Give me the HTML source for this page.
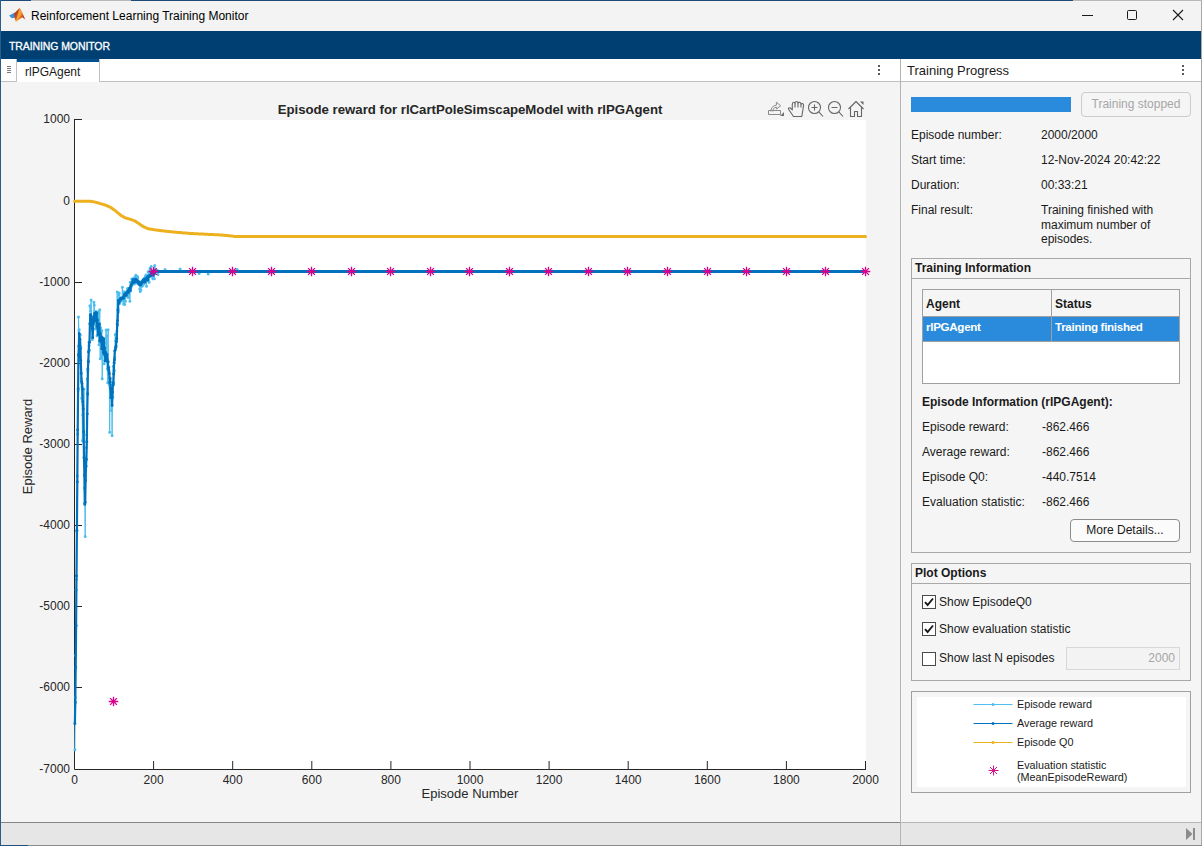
<!DOCTYPE html>
<html><head><meta charset="utf-8">
<style>
*{margin:0;padding:0;box-sizing:border-box}
html,body{width:1202px;height:846px;overflow:hidden;background:#f5f5f5}
body{position:relative;font-family:"Liberation Sans",sans-serif;font-size:12px;color:#1a1a1a}
.a{position:absolute}
.t{position:absolute;white-space:nowrap;line-height:1}
</style></head><body>
<!-- window edges -->
<div class="a" style="left:0;top:0;width:1202px;height:1px;background:#1e4a78"></div>
<div class="a" style="left:31px;top:0;width:100px;height:1px;background:#b8b8b8"></div>
<div class="a" style="left:1073px;top:0;width:129px;height:1px;background:#b8b8b8"></div>
<div class="a" style="left:0;top:0;width:1px;height:846px;background:#2a5d8c"></div>
<div class="a" style="left:1201px;top:1px;width:1px;height:845px;background:#a8a8a8"></div>
<!-- title bar -->
<div class="a" style="left:1px;top:1px;width:1200px;height:30px;background:#f3f3f3"></div>
<svg class="a" style="left:0;top:0" width="30" height="30" viewBox="0 0 30 30">
<defs><linearGradient id="mg" x1="14" y1="12" x2="25" y2="18" gradientUnits="userSpaceOnUse"><stop offset="0" stop-color="#9c2416"/><stop offset="0.35" stop-color="#d5541e"/><stop offset="0.55" stop-color="#f0a030"/><stop offset="0.8" stop-color="#c9361c"/><stop offset="1" stop-color="#b82c1a"/></linearGradient></defs>
<path d="M9,15.6L12.2,13.9L14.6,12.6L15.3,17.6L11.8,18.2Z" fill="#3d8fd6"/>
<path d="M14.2,13.6L19.5,8L21.8,11.5L25.2,19.6L22.3,17.2L15.9,21.8L14.6,17.8Z" fill="url(#mg)"/>
<path d="M19.5,8L21.3,11.5L19,17L15.9,21.8L17.2,16.5Z" fill="#f0a535"/>
</svg>
<div class="t" style="left:31px;top:10px;font-size:12px;color:#000">Reinforcement Learning Training Monitor</div>
<!-- window controls -->
<div class="a" style="left:1082px;top:15px;width:11px;height:1px;background:#1a1a1a"></div>
<div class="a" style="left:1127px;top:10px;width:10px;height:10px;border:1px solid #1a1a1a;border-radius:1.5px"></div>
<svg class="a" style="left:1172px;top:9px" width="12" height="12" viewBox="0 0 12 12"><path d="M1,1L11,11M11,1L1,11" stroke="#1a1a1a" stroke-width="1.1"/></svg>
<!-- toolstrip -->
<div class="a" style="left:1px;top:31px;width:1200px;height:28px;background:#003f72"></div>
<div class="t" style="left:9px;top:41px;font-size:10.5px;color:#fff;-webkit-text-stroke:0.3px #fff;letter-spacing:-0.1px">TRAINING MONITOR</div>
<!-- left document header row -->
<div class="a" style="left:1px;top:59px;width:899px;height:23px;background:#fff;border-bottom:1px solid #c0c0c0"></div>
<div class="a" style="left:1px;top:59px;width:16px;height:23px;background:#fff;border-right:1px solid #c0c0c0;border-bottom:1px solid #c0c0c0;border-bottom-right-radius:2px"></div>
<div class="a" style="left:7px;top:66px;width:4px;height:1px;background:#777"></div>
<div class="a" style="left:7px;top:68px;width:4px;height:1px;background:#777"></div>
<div class="a" style="left:7px;top:70px;width:4px;height:1px;background:#777"></div>
<div class="a" style="left:7px;top:72px;width:4px;height:1px;background:#777"></div>
<div class="a" style="left:17px;top:59px;width:83px;height:23px;background:#fff;border-right:1px solid #c0c0c0"></div><div class="a" style="left:17px;top:59px;width:82px;height:3px;background:#00508f"></div>
<div class="t" style="left:25px;top:66px;font-size:12px;color:#1a1a1a">rlPGAgent</div>
<div class="a" style="left:878px;top:65px;width:2px;height:2px;background:#5a5a5a"></div>
<div class="a" style="left:878px;top:69px;width:2px;height:2px;background:#5a5a5a"></div>
<div class="a" style="left:878px;top:73px;width:2px;height:2px;background:#5a5a5a"></div>
<!-- plot panel bg -->
<div class="a" style="left:1px;top:82px;width:899px;height:740px;background:#f4f4f4"></div>
<div class="a" style="left:75px;top:120px;width:791px;height:649px;background:#fff"></div>
<!-- separator -->
<div class="a" style="left:900px;top:59px;width:1px;height:787px;background:#b4b4b4"></div>
<!-- right header -->
<div class="a" style="left:901px;top:59px;width:300px;height:23px;background:#fff;border-bottom:1px solid #c0c0c0"></div>
<div class="t" style="left:907px;top:63.5px;font-size:13px;color:#1a1a1a">Training Progress</div>
<div class="a" style="left:1182px;top:65px;width:2px;height:2px;background:#5a5a5a"></div>
<div class="a" style="left:1182px;top:69px;width:2px;height:2px;background:#5a5a5a"></div>
<div class="a" style="left:1182px;top:73px;width:2px;height:2px;background:#5a5a5a"></div>
<!-- status bar -->
<div class="a" style="left:1px;top:822px;width:899px;height:1px;background:#858585"></div><div class="a" style="left:901px;top:822px;width:300px;height:1px;background:#b8b8b8"></div>
<div class="a" style="left:1px;top:823px;width:1200px;height:22px;background:#e6e6e6"></div>
<div class="a" style="left:900px;top:823px;width:1px;height:22px;background:#b4b4b4"></div>
<div class="a" style="left:0;top:845px;width:1202px;height:1px;background:#8c8c8c"></div><div class="a" style="left:0;top:845px;width:28px;height:1px;background:#1f5080"></div>
<svg class="a" style="left:1185px;top:827px" width="12" height="14" viewBox="0 0 12 14"><path d="M1,1L7.5,7L1,13Z" fill="#8c8c8c"/><rect x="8" y="1" width="2" height="12" fill="#8c8c8c"/></svg>
<svg class="a" style="left:0;top:0" width="1202" height="846"><path d="M74.5,119V769.5H866M75,119.5H82M75,201.5H82M75,282.5H82M75,363.5H82M75,444.5H82M75,525.5H82M75,606.5H82M75,687.5H82M153.6,769V761M232.7,769V761M311.8,769V761M390.9,769V761M470.0,769V761M549.1,769V761M628.2,769V761M707.3,769V761M786.4,769V761M865.5,769V761" fill="none" stroke="#262626" stroke-width="1"/></svg>
<div class="t" style="right:1132px;top:113.3px;font-size:12px;color:#262626;text-align:right">1000</div>
<div class="t" style="right:1132px;top:195.3px;font-size:12px;color:#262626;text-align:right">0</div>
<div class="t" style="right:1132px;top:276.3px;font-size:12px;color:#262626;text-align:right">-1000</div>
<div class="t" style="right:1132px;top:357.3px;font-size:12px;color:#262626;text-align:right">-2000</div>
<div class="t" style="right:1132px;top:438.3px;font-size:12px;color:#262626;text-align:right">-3000</div>
<div class="t" style="right:1132px;top:519.3px;font-size:12px;color:#262626;text-align:right">-4000</div>
<div class="t" style="right:1132px;top:600.3px;font-size:12px;color:#262626;text-align:right">-5000</div>
<div class="t" style="right:1132px;top:681.3px;font-size:12px;color:#262626;text-align:right">-6000</div>
<div class="t" style="right:1132px;top:763.3px;font-size:12px;color:#262626;text-align:right">-7000</div>
<div class="t" style="left:14.5px;width:120px;text-align:center;top:774px;font-size:12px;color:#262626">0</div>
<div class="t" style="left:93.6px;width:120px;text-align:center;top:774px;font-size:12px;color:#262626">200</div>
<div class="t" style="left:172.7px;width:120px;text-align:center;top:774px;font-size:12px;color:#262626">400</div>
<div class="t" style="left:251.8px;width:120px;text-align:center;top:774px;font-size:12px;color:#262626">600</div>
<div class="t" style="left:330.9px;width:120px;text-align:center;top:774px;font-size:12px;color:#262626">800</div>
<div class="t" style="left:410.0px;width:120px;text-align:center;top:774px;font-size:12px;color:#262626">1000</div>
<div class="t" style="left:489.1px;width:120px;text-align:center;top:774px;font-size:12px;color:#262626">1200</div>
<div class="t" style="left:568.2px;width:120px;text-align:center;top:774px;font-size:12px;color:#262626">1400</div>
<div class="t" style="left:647.3px;width:120px;text-align:center;top:774px;font-size:12px;color:#262626">1600</div>
<div class="t" style="left:726.4px;width:120px;text-align:center;top:774px;font-size:12px;color:#262626">1800</div>
<div class="t" style="left:805.5px;width:120px;text-align:center;top:774px;font-size:12px;color:#262626">2000</div>
<div class="t" style="left:270px;width:400px;text-align:center;top:103px;font-size:13.2px;font-weight:bold;color:#262626">Episode reward for rlCartPoleSimscapeModel with rlPGAgent</div>
<div class="t" style="left:370px;width:200px;text-align:center;top:787px;font-size:13px;color:#262626">Episode Number</div>
<div class="t" style="left:-73px;width:200px;text-align:center;top:439.5px;font-size:13px;color:#262626;transform:rotate(-90deg)">Episode Reward</div><svg width="1202" height="846" viewBox="0 0 1202 846" style="position:absolute;left:0;top:0">
<defs><clipPath id="ax"><rect x="72" y="117" width="800" height="655"/></clipPath></defs>
<g clip-path="url(#ax)">
<path d="M74.5,201.2L75.5,201.2L76.5,201.2L77.5,201.2L78.5,201.2L79.5,201.2L80.5,201.2L81.5,201.2L82.5,201.2L83.5,201.2L84.5,201.2L85.5,201.2L86.5,201.2L87.5,201.2L88.5,201.2L89.5,201.2L90.5,201.3L91.5,201.5L92.5,201.6L93.5,201.8L94.5,201.9L95.5,202.2L96.5,202.4L97.5,202.8L98.5,203.1L99.5,203.3L100.5,203.7L101.5,203.9L102.5,204.2L103.5,204.6L104.5,204.8L105.5,205.2L106.5,205.6L107.5,206L108.5,206.4L109.5,206.8L110.5,207.3L111.5,208L112.5,208.7L113.5,209.4L114.5,210.1L115.5,210.9L116.5,211.7L117.5,212.6L118.5,213.4L119.5,214.2L120.5,215.1L121.5,215.8L122.5,216.3L123.5,216.9L124.5,217.5L125.5,217.9L126.5,218.2L127.5,218.5L128.5,218.8L129.5,219.1L130.5,219.4L131.5,219.7L132.5,220.1L133.5,220.4L134.5,220.8L135.5,221.4L136.5,222L137.5,222.7L138.5,223.3L139.5,224L140.5,224.7L141.5,225.4L142.5,226.1L143.5,226.7L144.5,227.2L145.5,227.6L146.5,228L147.5,228.5L148.5,228.8L149.5,229L150.5,229.1L151.5,229.3L152.5,229.5L153.5,229.6L154.5,229.8L155.5,229.9L156.5,230L157.5,230.2L158.5,230.3L159.5,230.4L160.5,230.5L161.5,230.7L162.5,230.8L163.5,230.9L164.5,231L165.5,231.2L166.5,231.3L167.5,231.4L168.5,231.5L169.5,231.6L170.5,231.7L171.5,231.8L172.5,231.9L173.5,232L174.5,232.1L175.5,232.2L176.5,232.3L177.5,232.4L178.5,232.5L179.5,232.5L180.5,232.6L181.5,232.7L182.5,232.8L183.5,232.9L184.5,233L185.5,233L186.5,233.1L187.5,233.2L188.5,233.3L189.5,233.4L190.5,233.4L191.5,233.5L192.5,233.5L193.5,233.6L194.5,233.7L195.5,233.7L196.5,233.8L197.5,233.8L198.5,233.9L199.5,233.9L200.5,234L201.5,234L202.5,234.1L203.5,234.1L204.5,234.2L205.5,234.2L206.5,234.3L207.5,234.3L208.5,234.4L209.5,234.4L210.5,234.5L211.5,234.5L212.5,234.6L213.5,234.6L214.5,234.7L215.5,234.7L216.5,234.8L217.5,234.8L218.5,234.8L219.5,234.9L220.5,235L221.5,235.1L222.5,235.1L223.5,235.2L224.5,235.3L225.5,235.4L226.5,235.5L227.5,235.6L228.5,235.7L229.5,235.8L230.5,235.9L231.5,236L232.5,236.1L233.5,236.3L234.5,236.4L235.5,236.5L236.5,236.6L237.5,236.6L238.5,236.6L239.5,236.6L865.5,236.6" fill="none" stroke="#EDB120" stroke-width="3" stroke-linejoin="round" stroke-linecap="round"/>
<path d="M74.9,749.8L75.3,697.2L75.7,655.5L76.1,590L76.5,579.6L76.9,530.7L77.3,476L77.7,434.1L78.1,390.6L78.5,317L78.9,330.6L79.2,329.7L79.6,347.7L80,351.7L80.4,335.1L80.8,346.9L81.2,378.7L81.6,398.3L82,386.4L82.4,440.6L82.8,414.8L83.2,405.3L83.6,441.9L84,389L84.4,487.9L84.8,502.9L85.2,536.6L85.6,475.9L86,466.8L86.4,447.4L86.8,434.8L87.2,379L87.6,394.1L87.9,371.3L88.3,360.7L88.7,351.6L89.1,345.5L89.5,350L89.9,305.8L90.3,306.5L90.7,310.9L91.1,300L91.5,318.8L91.9,325.3L92.3,339.6L92.7,316.8L93.1,328.3L93.5,324.6L93.9,302.2L94.3,305.2L94.7,322.2L95.1,323.4L95.5,329L95.9,311.5L96.3,324.1L96.6,322.5L97,335.8L97.4,314.7L97.8,324L98.2,331.4L98.6,311.4L99,344.8L99.4,323.2L99.8,309.8L100.2,358.8L100.6,327.7L101,332.8L101.4,357.6L101.8,330.4L102.2,378.7L102.6,351.6L103,352.8L103.4,354.8L103.8,352.7L104.2,363.8L104.6,360.6L105,356.3L105.3,342.7L105.7,342.7L106.1,330L106.5,359.9L106.9,335.7L107.3,368.8L107.7,382.8L108.1,329.7L108.5,361.7L108.9,367.3L109.3,385.1L109.7,432.3L110.1,382.1L110.5,382L110.9,389.3L111.3,410.5L111.7,389.9L112.1,435.6L112.5,398.1L112.9,397L113.3,366.2L113.7,384.8L114.1,370.2L114.4,370.7L114.8,357.5L115.2,334.4L115.6,340.9L116,347L116.4,339.3L116.8,331.4L117.2,292L117.6,325.2L118,308.6L118.4,312L118.8,294.7L119.2,293L119.6,303.4L120,298.5L120.4,301.6L120.8,301L121.2,298.2L121.6,301L122,298.5L122.4,287.3L122.8,298.1L123.1,297.6L123.5,303.9L123.9,291.7L124.3,296L124.7,304.6L125.1,294.6L125.5,301.3L125.9,295.7L126.3,291.9L126.7,293.9L127.1,295.9L127.5,288.4L127.9,290.9L128.3,297.6L128.7,294.4L129.1,290.4L129.5,288.2L129.9,301.3L130.3,282.2L130.7,291.1L131.1,287.6L131.5,285.7L131.8,278.9L132.2,280.1L132.6,283.9L133,281.8L133.4,278.5L133.8,282.4L134.2,284.1L134.6,277.5L135,278L135.4,276.6L135.8,275.3L136.2,283L136.6,282.1L137,282L137.4,276.6L137.8,277.7L138.2,282.2L138.6,281.4L139,284.2L139.4,281.5L139.8,288.9L140.2,291.5L140.5,290.1L140.9,290L141.3,283.4L141.7,286.5L142.1,280.9L142.5,285.7L142.9,280.1L143.3,279.5L143.7,278.7L144.1,284L144.5,282.2L144.9,281.7L145.3,276.3L145.7,281.3L146.1,274.9L146.5,286.2L146.9,276.5L147.3,279.9L147.7,278.2L148.1,271.7L148.5,271.9L148.9,276.7L149.2,282.2L149.6,271.2L150,268.5L150.4,274.3L150.8,267.1L151.2,266.5L151.6,271.4L152,272.7L152.4,271.2L152.8,278.8L153.2,271.8L153.6,273.7L154,278.5L154.4,278.8L154.8,265.5L155.2,270.2L155.6,271.5L156,271.4L156.4,271.3L156.8,271.3L157.2,271.3L157.6,271.3L158,274.4L158.3,271.3L158.7,271.4L159.1,271.4L159.5,271.4L159.9,271.4L160.3,271.4L160.7,271.4L161.1,271.4L161.5,271.4L161.9,271.4L162.3,271.4L162.7,271.4L163.1,271.4L163.5,271.4L163.9,271.4L164.3,271.4L164.7,271.4L165.1,269.4L165.5,271.4L165.9,271.4L166.3,271.4L166.7,271.4L167,271.4L167.4,271.4L167.8,271.4L168.2,271.4L168.6,271.4L169,271.4L169.4,271.4L169.8,271.4L170.2,271.4L170.6,271.4L171,271.4L171.4,271.4L171.8,271.4L172.2,271.4L172.6,271.4L173,271.4L173.4,271.4L173.8,271.4L174.2,271.4L174.6,271.4L175,271.4L175.4,271.4L175.7,271.4L176.1,271.4L176.5,271.4L176.9,271.4L177.3,271.4L177.7,271.4L178.1,271.4L178.5,271.4L178.9,271.4L179.3,271.4L179.7,271.4L180.1,268.9L180.5,271.4L180.9,271.4L181.3,271.4L181.7,271.4L182.1,271.4L182.5,271.4L182.9,271.4L183.3,271.4L183.7,271.4L184.1,271.4L184.4,271.4L184.8,271.4L185.2,271.4L185.6,271.4L186,271.4L186.4,271.4L186.8,271.4L187.2,271.4L187.6,271.4L188,271.4L188.4,271.4L188.8,271.4L189.2,271.4L189.6,271.4L190,271.4L190.4,271.4L190.8,271.4L191.2,271.4L191.6,271.4L192,271.4L192.4,271.4L192.8,271.4L193.2,271.4L193.5,271.4L193.9,271.4L194.3,271.4L194.7,271.4L195.1,271.4L195.5,271.4L195.9,271.4L196.3,271.4L196.7,271.4L197.1,271.4L197.5,271.4L197.9,271.4L198.3,271.4L198.7,271.4L199.1,273.4L199.5,271.4L199.9,271.4L200.3,271.4L200.7,271.4L201.1,271.4L201.5,271.4L201.9,271.4L202.2,271.4L202.6,271.4L203,271.4L203.4,271.4L203.8,271.4L204.2,271.4L204.6,271.4L205,271.4L205.4,271.4L205.8,271.4L206.2,271.4L206.6,271.4L207,271.4L207.4,271.4L207.8,271.4L208.2,273.9L208.6,271.4L209,271.4L209.4,271.4L209.8,271.4L210.2,271.4L210.6,271.4L210.9,271.4L211.3,271.4L211.7,271.4L212.1,271.4L212.5,271.4L212.9,271.4L213.3,271.4L213.7,271.4L214.1,271.4L214.5,271.4L214.9,271.4L215.3,271.4L215.7,271.4L216.1,271.4L216.5,271.4L216.9,271.4L217.3,271.4L217.7,271.4L218.1,271.4L218.5,271.4L218.9,271.4L219.3,271.4L219.6,271.4L220,271.4L220.4,271.4L220.8,271.4L221.2,271.4L221.6,271.4L222,271.4L222.4,271.4L222.8,271.4L223.2,271.4L223.6,271.4L224,271.4L224.4,271.4L224.8,271.4L225.2,271.4L225.6,271.4L226,271.4L226.4,271.4L226.8,271.4L227.2,271.4L227.6,271.4L228,271.4L228.3,271.4L228.7,271.4L229.1,271.4L229.5,271.4L229.9,271.4L230.3,271.4L230.7,271.4L231.1,271.4L231.5,271.4L231.9,271.4L232.3,271.4L232.7,271.4L233.1,271.4L233.5,271.4L233.9,271.4L234.3,271.4L234.7,271.4L235.1,271.4L235.5,271.4L235.9,271.4L236.3,271.4L236.7,271.4L237.1,269.4L237.4,271.4L237.8,271.4L238.2,271.4L238.6,271.4L239,271.4L239.4,271.4L239.8,271.4L865.5,271.4" fill="none" stroke="#4DBEEE" stroke-width="1" stroke-linejoin="round"/>
<path d="M74.9,749.8h0M75.3,697.2h0M75.7,655.5h0M76.1,590h0M76.5,579.6h0M76.9,530.7h0M77.3,476h0M77.7,434.1h0M78.1,390.6h0M78.5,317h0M78.9,330.6h0M79.2,329.7h0M79.6,347.7h0M80,351.7h0M80.4,335.1h0M80.8,346.9h0M81.2,378.7h0M81.6,398.3h0M82,386.4h0M82.4,440.6h0M82.8,414.8h0M83.2,405.3h0M83.6,441.9h0M84,389h0M84.4,487.9h0M84.8,502.9h0M85.2,536.6h0M85.6,475.9h0M86,466.8h0M86.4,447.4h0M86.8,434.8h0M87.2,379h0M87.6,394.1h0M87.9,371.3h0M88.3,360.7h0M88.7,351.6h0M89.1,345.5h0M89.5,350h0M89.9,305.8h0M90.3,306.5h0M90.7,310.9h0M91.1,300h0M91.5,318.8h0M91.9,325.3h0M92.3,339.6h0M92.7,316.8h0M93.1,328.3h0M93.5,324.6h0M93.9,302.2h0M94.3,305.2h0M94.7,322.2h0M95.1,323.4h0M95.5,329h0M95.9,311.5h0M96.3,324.1h0M96.6,322.5h0M97,335.8h0M97.4,314.7h0M97.8,324h0M98.2,331.4h0M98.6,311.4h0M99,344.8h0M99.4,323.2h0M99.8,309.8h0M100.2,358.8h0M100.6,327.7h0M101,332.8h0M101.4,357.6h0M101.8,330.4h0M102.2,378.7h0M102.6,351.6h0M103,352.8h0M103.4,354.8h0M103.8,352.7h0M104.2,363.8h0M104.6,360.6h0M105,356.3h0M105.3,342.7h0M105.7,342.7h0M106.1,330h0M106.5,359.9h0M106.9,335.7h0M107.3,368.8h0M107.7,382.8h0M108.1,329.7h0M108.5,361.7h0M108.9,367.3h0M109.3,385.1h0M109.7,432.3h0M110.1,382.1h0M110.5,382h0M110.9,389.3h0M111.3,410.5h0M111.7,389.9h0M112.1,435.6h0M112.5,398.1h0M112.9,397h0M113.3,366.2h0M113.7,384.8h0M114.1,370.2h0M114.4,370.7h0M114.8,357.5h0M115.2,334.4h0M115.6,340.9h0M116,347h0M116.4,339.3h0M116.8,331.4h0M117.2,292h0M117.6,325.2h0M118,308.6h0M118.4,312h0M118.8,294.7h0M119.2,293h0M119.6,303.4h0M120,298.5h0M120.4,301.6h0M120.8,301h0M121.2,298.2h0M121.6,301h0M122,298.5h0M122.4,287.3h0M122.8,298.1h0M123.1,297.6h0M123.5,303.9h0M123.9,291.7h0M124.3,296h0M124.7,304.6h0M125.1,294.6h0M125.5,301.3h0M125.9,295.7h0M126.3,291.9h0M126.7,293.9h0M127.1,295.9h0M127.5,288.4h0M127.9,290.9h0M128.3,297.6h0M128.7,294.4h0M129.1,290.4h0M129.5,288.2h0M129.9,301.3h0M130.3,282.2h0M130.7,291.1h0M131.1,287.6h0M131.5,285.7h0M131.8,278.9h0M132.2,280.1h0M132.6,283.9h0M133,281.8h0M133.4,278.5h0M133.8,282.4h0M134.2,284.1h0M134.6,277.5h0M135,278h0M135.4,276.6h0M135.8,275.3h0M136.2,283h0M136.6,282.1h0M137,282h0M137.4,276.6h0M137.8,277.7h0M138.2,282.2h0M138.6,281.4h0M139,284.2h0M139.4,281.5h0M139.8,288.9h0M140.2,291.5h0M140.5,290.1h0M140.9,290h0M141.3,283.4h0M141.7,286.5h0M142.1,280.9h0M142.5,285.7h0M142.9,280.1h0M143.3,279.5h0M143.7,278.7h0M144.1,284h0M144.5,282.2h0M144.9,281.7h0M145.3,276.3h0M145.7,281.3h0M146.1,274.9h0M146.5,286.2h0M146.9,276.5h0M147.3,279.9h0M147.7,278.2h0M148.1,271.7h0M148.5,271.9h0M148.9,276.7h0M149.2,282.2h0M149.6,271.2h0M150,268.5h0M150.4,274.3h0M150.8,267.1h0M151.2,266.5h0M151.6,271.4h0M152,272.7h0M152.4,271.2h0M152.8,278.8h0M153.2,271.8h0M153.6,273.7h0M154,278.5h0M154.4,278.8h0M154.8,265.5h0M155.2,270.2h0M155.6,271.5h0M156,271.4h0M156.4,271.3h0M156.8,271.3h0M157.2,271.3h0M157.6,271.3h0M158,274.4h0M158.3,271.3h0M158.7,271.4h0M159.1,271.4h0M159.5,271.4h0M159.9,271.4h0M160.3,271.4h0M160.7,271.4h0M161.1,271.4h0M161.5,271.4h0M161.9,271.4h0M162.3,271.4h0M162.7,271.4h0M163.1,271.4h0M163.5,271.4h0M163.9,271.4h0M164.3,271.4h0M164.7,271.4h0M165.1,269.4h0M165.5,271.4h0M165.9,271.4h0M166.3,271.4h0M166.7,271.4h0M167,271.4h0M167.4,271.4h0M167.8,271.4h0M168.2,271.4h0M168.6,271.4h0M169,271.4h0M169.4,271.4h0M169.8,271.4h0M170.2,271.4h0M170.6,271.4h0M171,271.4h0M171.4,271.4h0M171.8,271.4h0M172.2,271.4h0M172.6,271.4h0M173,271.4h0M173.4,271.4h0M173.8,271.4h0M174.2,271.4h0M174.6,271.4h0M175,271.4h0M175.4,271.4h0M175.7,271.4h0M176.1,271.4h0M176.5,271.4h0M176.9,271.4h0M177.3,271.4h0M177.7,271.4h0M178.1,271.4h0M178.5,271.4h0M178.9,271.4h0M179.3,271.4h0M179.7,271.4h0M180.1,268.9h0M180.5,271.4h0M180.9,271.4h0M181.3,271.4h0M181.7,271.4h0M182.1,271.4h0M182.5,271.4h0M182.9,271.4h0M183.3,271.4h0M183.7,271.4h0M184.1,271.4h0M184.4,271.4h0M184.8,271.4h0M185.2,271.4h0M185.6,271.4h0M186,271.4h0M186.4,271.4h0M186.8,271.4h0M187.2,271.4h0M187.6,271.4h0M188,271.4h0M188.4,271.4h0M188.8,271.4h0M189.2,271.4h0M189.6,271.4h0M190,271.4h0M190.4,271.4h0M190.8,271.4h0M191.2,271.4h0M191.6,271.4h0M192,271.4h0M192.4,271.4h0M192.8,271.4h0M193.2,271.4h0M193.5,271.4h0M193.9,271.4h0M194.3,271.4h0M194.7,271.4h0M195.1,271.4h0M195.5,271.4h0M195.9,271.4h0M196.3,271.4h0M196.7,271.4h0M197.1,271.4h0M197.5,271.4h0M197.9,271.4h0M198.3,271.4h0M198.7,271.4h0M199.1,273.4h0M199.5,271.4h0M199.9,271.4h0M200.3,271.4h0M200.7,271.4h0M201.1,271.4h0M201.5,271.4h0M201.9,271.4h0M202.2,271.4h0M202.6,271.4h0M203,271.4h0M203.4,271.4h0M203.8,271.4h0M204.2,271.4h0M204.6,271.4h0M205,271.4h0M205.4,271.4h0M205.8,271.4h0M206.2,271.4h0M206.6,271.4h0M207,271.4h0M207.4,271.4h0M207.8,271.4h0M208.2,273.9h0M208.6,271.4h0M209,271.4h0M209.4,271.4h0M209.8,271.4h0M210.2,271.4h0M210.6,271.4h0M210.9,271.4h0M211.3,271.4h0M211.7,271.4h0M212.1,271.4h0M212.5,271.4h0M212.9,271.4h0M213.3,271.4h0M213.7,271.4h0M214.1,271.4h0M214.5,271.4h0M214.9,271.4h0M215.3,271.4h0M215.7,271.4h0M216.1,271.4h0M216.5,271.4h0M216.9,271.4h0M217.3,271.4h0M217.7,271.4h0M218.1,271.4h0M218.5,271.4h0M218.9,271.4h0M219.3,271.4h0M219.6,271.4h0M220,271.4h0M220.4,271.4h0M220.8,271.4h0M221.2,271.4h0M221.6,271.4h0M222,271.4h0M222.4,271.4h0M222.8,271.4h0M223.2,271.4h0M223.6,271.4h0M224,271.4h0M224.4,271.4h0M224.8,271.4h0M225.2,271.4h0M225.6,271.4h0M226,271.4h0M226.4,271.4h0M226.8,271.4h0M227.2,271.4h0M227.6,271.4h0M228,271.4h0M228.3,271.4h0M228.7,271.4h0M229.1,271.4h0M229.5,271.4h0M229.9,271.4h0M230.3,271.4h0M230.7,271.4h0M231.1,271.4h0M231.5,271.4h0M231.9,271.4h0M232.3,271.4h0M232.7,271.4h0M233.1,271.4h0M233.5,271.4h0M233.9,271.4h0M234.3,271.4h0M234.7,271.4h0M235.1,271.4h0M235.5,271.4h0M235.9,271.4h0M236.3,271.4h0M236.7,271.4h0M237.1,269.4h0M237.4,271.4h0M237.8,271.4h0M238.2,271.4h0M238.6,271.4h0M239,271.4h0M239.4,271.4h0M239.8,271.4h0" fill="none" stroke="#4DBEEE" stroke-width="3" stroke-linecap="round"/>
<path d="M74.9,723.6L75.3,702.2L75.7,667L76.1,625.6L76.5,575.8L76.9,530.6L77.3,481.7L77.7,429.8L78.1,388.6L78.5,354.7L78.9,345.9L79.2,333.4L79.6,343.6L80,339.2L80.4,348.7L80.8,360.6L81.2,373.3L81.6,381.6L82,383.4L82.4,389.1L82.8,401.6L83.2,408.8L83.6,431.8L84,457.4L84.4,475.1L84.8,504.2L85.2,502.3L85.6,480.2L86,465.7L86.4,459.3L86.8,441.7L87.2,413.8L87.6,393.8L87.9,369L88.3,361.7L88.7,351.7L89.1,342.2L89.5,342.3L89.9,323.8L90.3,315.2L90.7,314.6L91.1,316.4L91.5,325.2L91.9,323.7L92.3,328.5L92.7,337.6L93.1,323.7L93.5,318.7L93.9,321.6L94.3,315.9L94.7,313.3L95.1,316.8L95.5,320.6L95.9,312.5L96.3,319.1L96.6,312.9L97,326.3L97.4,320L97.8,328.2L98.2,334.4L98.6,334.2L99,332.1L99.4,324.1L99.8,341.1L100.2,333.5L100.6,340L101,336.6L101.4,339.5L101.8,348.8L102.2,337.5L102.6,341L103,346.6L103.4,352.5L103.8,338.7L104.2,354.1L104.6,347.8L105,352.6L105.3,360.7L105.7,352.6L106.1,355.4L106.5,357.9L106.9,354.6L107.3,359.7L107.7,361.8L108.1,366.7L108.5,368L108.9,370.5L109.3,373.5L109.7,382.4L110.1,378.2L110.5,388.2L110.9,397.6L111.3,390.7L111.7,393.5L112.1,405.3L112.5,391.9L112.9,384.7L113.3,382.7L113.7,373.8L114.1,362.7L114.4,359.8L114.8,350.8L115.2,350.1L115.6,347.7L116,345.9L116.4,341.5L116.8,338.5L117.2,323.7L117.6,320.4L118,309.9L118.4,300.3L118.8,303L119.2,301.5L119.6,300.6L120,300.1L120.4,299.4L120.8,298L121.2,298.3L121.6,298.5L122,298.6L122.4,298.4L122.8,297.6L123.1,297.5L123.5,298L123.9,296.4L124.3,295.4L124.7,294.1L125.1,295.2L125.5,295.3L125.9,293.8L126.3,295.2L126.7,292.4L127.1,292.5L127.5,292.3L127.9,290.7L128.3,292.5L128.7,290.2L129.1,289.3L129.5,288.2L129.9,290.4L130.3,289.7L130.7,286.3L131.1,284.8L131.5,284.7L131.8,284L132.2,282.4L132.6,282.3L133,279.7L133.4,282.6L133.8,280.8L134.2,281.3L134.6,279.8L135,281.1L135.4,281.7L135.8,279.2L136.2,280L136.6,281.1L137,281.1L137.4,280.4L137.8,281.4L138.2,283.1L138.6,283.4L139,283L139.4,284.6L139.8,282.5L140.2,284.4L140.5,284.9L140.9,284.5L141.3,282.7L141.7,283L142.1,282.6L142.5,281.8L142.9,280.8L143.3,280L143.7,280.7L144.1,279.9L144.5,278.9L144.9,282.1L145.3,279.3L145.7,280L146.1,279.8L146.5,278.4L146.9,279.9L147.3,277.2L147.7,280.1L148.1,276.3L148.5,276.3L148.9,276.4L149.2,275.8L149.6,275.4L150,275.9L150.4,275.6L150.8,276.1L151.2,272.1L151.6,274.1L152,273.6L152.4,272.5L152.8,271.3L153.2,274.9L153.6,273.6L154,270.4L154.4,273.6L154.8,272.4L155.2,272L155.6,271.5L156,271.4L156.4,271.3L156.8,271.3L157.2,271.3L157.6,271.3L158,271.3L158.3,271.3L158.7,271.4L159.1,271.4L159.5,271.4L159.9,271.4L160.3,271.4L160.7,271.4L161.1,271.4L161.5,271.4L161.9,271.4L162.3,271.4L162.7,271.4L163.1,271.4L163.5,271.4L163.9,271.4L164.3,271.4L164.7,271.4L165.1,271.4L165.5,271.4L165.9,271.4L166.3,271.4L166.7,271.4L167,271.4L167.4,271.4L167.8,271.4L168.2,271.4L168.6,271.4L169,271.4L169.4,271.4L169.8,271.4L170.2,271.4L170.6,271.4L171,271.4L171.4,271.4L171.8,271.4L172.2,271.4L172.6,271.4L173,271.4L173.4,271.4L173.8,271.4L174.2,271.4L174.6,271.4L175,271.4L175.4,271.4L175.7,271.4L176.1,271.4L176.5,271.4L176.9,271.4L177.3,271.4L177.7,271.4L178.1,271.4L178.5,271.4L178.9,271.4L179.3,271.4L179.7,271.4L180.1,271.4L180.5,271.4L180.9,271.4L181.3,271.4L181.7,271.4L182.1,271.4L182.5,271.4L182.9,271.4L183.3,271.4L183.7,271.4L184.1,271.4L184.4,271.4L184.8,271.4L185.2,271.4L185.6,271.4L186,271.4L186.4,271.4L186.8,271.4L187.2,271.4L187.6,271.4L188,271.4L188.4,271.4L188.8,271.4L189.2,271.4L189.6,271.4L190,271.4L190.4,271.4L190.8,271.4L191.2,271.4L191.6,271.4L192,271.4L192.4,271.4L192.8,271.4L193.2,271.4L193.5,271.4L193.9,271.4L194.3,271.4L194.7,271.4L195.1,271.4L195.5,271.4L195.9,271.4L196.3,271.4L196.7,271.4L197.1,271.4L197.5,271.4L197.9,271.4L198.3,271.4L198.7,271.4L199.1,271.4L199.5,271.4L199.9,271.4L200.3,271.4L200.7,271.4L201.1,271.4L201.5,271.4L201.9,271.4L202.2,271.4L202.6,271.4L203,271.4L203.4,271.4L203.8,271.4L204.2,271.4L204.6,271.4L205,271.4L205.4,271.4L205.8,271.4L206.2,271.4L206.6,271.4L207,271.4L207.4,271.4L207.8,271.4L208.2,271.4L208.6,271.4L209,271.4L209.4,271.4L209.8,271.4L210.2,271.4L210.6,271.4L210.9,271.4L211.3,271.4L211.7,271.4L212.1,271.4L212.5,271.4L212.9,271.4L213.3,271.4L213.7,271.4L214.1,271.4L214.5,271.4L214.9,271.4L215.3,271.4L215.7,271.4L216.1,271.4L216.5,271.4L216.9,271.4L217.3,271.4L217.7,271.4L218.1,271.4L218.5,271.4L218.9,271.4L219.3,271.4L219.6,271.4L220,271.4L220.4,271.4L220.8,271.4L221.2,271.4L221.6,271.4L222,271.4L222.4,271.4L222.8,271.4L223.2,271.4L223.6,271.4L224,271.4L224.4,271.4L224.8,271.4L225.2,271.4L225.6,271.4L226,271.4L226.4,271.4L226.8,271.4L227.2,271.4L227.6,271.4L228,271.4L228.3,271.4L228.7,271.4L229.1,271.4L229.5,271.4L229.9,271.4L230.3,271.4L230.7,271.4L231.1,271.4L231.5,271.4L231.9,271.4L232.3,271.4L232.7,271.4L233.1,271.4L233.5,271.4L233.9,271.4L234.3,271.4L234.7,271.4L235.1,271.4L235.5,271.4L235.9,271.4L236.3,271.4L236.7,271.4L237.1,271.4L237.4,271.4L237.8,271.4L238.2,271.4L238.6,271.4L239,271.4L239.4,271.4L239.8,271.4L865.5,271.4" fill="none" stroke="#0072BD" stroke-width="2.2" stroke-linejoin="round"/>
<path d="M239.8,271.4H865.5" stroke="#0072BD" stroke-width="3"/>
<path d="M74.9,723.6h0M75.3,702.2h0M75.7,667h0M76.1,625.6h0M76.5,575.8h0M76.9,530.6h0M77.3,481.7h0M77.7,429.8h0M78.1,388.6h0M78.5,354.7h0M78.9,345.9h0M79.2,333.4h0M79.6,343.6h0M80,339.2h0M80.4,348.7h0M80.8,360.6h0M81.2,373.3h0M81.6,381.6h0M82,383.4h0M82.4,389.1h0M82.8,401.6h0M83.2,408.8h0M83.6,431.8h0M84,457.4h0M84.4,475.1h0M84.8,504.2h0M85.2,502.3h0M85.6,480.2h0M86,465.7h0M86.4,459.3h0M86.8,441.7h0M87.2,413.8h0M87.6,393.8h0M87.9,369h0M88.3,361.7h0M88.7,351.7h0M89.1,342.2h0M89.5,342.3h0M89.9,323.8h0M90.3,315.2h0M90.7,314.6h0M91.1,316.4h0M91.5,325.2h0M91.9,323.7h0M92.3,328.5h0M92.7,337.6h0M93.1,323.7h0M93.5,318.7h0M93.9,321.6h0M94.3,315.9h0M94.7,313.3h0M95.1,316.8h0M95.5,320.6h0M95.9,312.5h0M96.3,319.1h0M96.6,312.9h0M97,326.3h0M97.4,320h0M97.8,328.2h0M98.2,334.4h0M98.6,334.2h0M99,332.1h0M99.4,324.1h0M99.8,341.1h0M100.2,333.5h0M100.6,340h0M101,336.6h0M101.4,339.5h0M101.8,348.8h0M102.2,337.5h0M102.6,341h0M103,346.6h0M103.4,352.5h0M103.8,338.7h0M104.2,354.1h0M104.6,347.8h0M105,352.6h0M105.3,360.7h0M105.7,352.6h0M106.1,355.4h0M106.5,357.9h0M106.9,354.6h0M107.3,359.7h0M107.7,361.8h0M108.1,366.7h0M108.5,368h0M108.9,370.5h0M109.3,373.5h0M109.7,382.4h0M110.1,378.2h0M110.5,388.2h0M110.9,397.6h0M111.3,390.7h0M111.7,393.5h0M112.1,405.3h0M112.5,391.9h0M112.9,384.7h0M113.3,382.7h0M113.7,373.8h0M114.1,362.7h0M114.4,359.8h0M114.8,350.8h0M115.2,350.1h0M115.6,347.7h0M116,345.9h0M116.4,341.5h0M116.8,338.5h0M117.2,323.7h0M117.6,320.4h0M118,309.9h0M118.4,300.3h0M118.8,303h0M119.2,301.5h0M119.6,300.6h0M120,300.1h0M120.4,299.4h0M120.8,298h0M121.2,298.3h0M121.6,298.5h0M122,298.6h0M122.4,298.4h0M122.8,297.6h0M123.1,297.5h0M123.5,298h0M123.9,296.4h0M124.3,295.4h0M124.7,294.1h0M125.1,295.2h0M125.5,295.3h0M125.9,293.8h0M126.3,295.2h0M126.7,292.4h0M127.1,292.5h0M127.5,292.3h0M127.9,290.7h0M128.3,292.5h0M128.7,290.2h0M129.1,289.3h0M129.5,288.2h0M129.9,290.4h0M130.3,289.7h0M130.7,286.3h0M131.1,284.8h0M131.5,284.7h0M131.8,284h0M132.2,282.4h0M132.6,282.3h0M133,279.7h0M133.4,282.6h0M133.8,280.8h0M134.2,281.3h0M134.6,279.8h0M135,281.1h0M135.4,281.7h0M135.8,279.2h0M136.2,280h0M136.6,281.1h0M137,281.1h0M137.4,280.4h0M137.8,281.4h0M138.2,283.1h0M138.6,283.4h0M139,283h0M139.4,284.6h0M139.8,282.5h0M140.2,284.4h0M140.5,284.9h0M140.9,284.5h0M141.3,282.7h0M141.7,283h0M142.1,282.6h0M142.5,281.8h0M142.9,280.8h0M143.3,280h0M143.7,280.7h0M144.1,279.9h0M144.5,278.9h0M144.9,282.1h0M145.3,279.3h0M145.7,280h0M146.1,279.8h0M146.5,278.4h0M146.9,279.9h0M147.3,277.2h0M147.7,280.1h0M148.1,276.3h0M148.5,276.3h0M148.9,276.4h0M149.2,275.8h0M149.6,275.4h0M150,275.9h0M150.4,275.6h0M150.8,276.1h0M151.2,272.1h0M151.6,274.1h0M152,273.6h0M152.4,272.5h0M152.8,271.3h0M153.2,274.9h0M153.6,273.6h0M154,270.4h0M154.4,273.6h0M154.8,272.4h0M155.2,272h0M155.6,271.5h0M156,271.4h0M156.4,271.3h0M156.8,271.3h0M157.2,271.3h0M157.6,271.3h0M158,271.3h0M158.3,271.3h0M158.7,271.4h0M159.1,271.4h0M159.5,271.4h0M159.9,271.4h0M160.3,271.4h0M160.7,271.4h0M161.1,271.4h0M161.5,271.4h0M161.9,271.4h0M162.3,271.4h0M162.7,271.4h0M163.1,271.4h0M163.5,271.4h0M163.9,271.4h0M164.3,271.4h0M164.7,271.4h0M165.1,271.4h0M165.5,271.4h0M165.9,271.4h0M166.3,271.4h0M166.7,271.4h0M167,271.4h0M167.4,271.4h0M167.8,271.4h0M168.2,271.4h0M168.6,271.4h0M169,271.4h0M169.4,271.4h0M169.8,271.4h0M170.2,271.4h0M170.6,271.4h0M171,271.4h0M171.4,271.4h0M171.8,271.4h0M172.2,271.4h0M172.6,271.4h0M173,271.4h0M173.4,271.4h0M173.8,271.4h0M174.2,271.4h0M174.6,271.4h0M175,271.4h0M175.4,271.4h0M175.7,271.4h0M176.1,271.4h0M176.5,271.4h0M176.9,271.4h0M177.3,271.4h0M177.7,271.4h0M178.1,271.4h0M178.5,271.4h0M178.9,271.4h0M179.3,271.4h0M179.7,271.4h0M180.1,271.4h0M180.5,271.4h0M180.9,271.4h0M181.3,271.4h0M181.7,271.4h0M182.1,271.4h0M182.5,271.4h0M182.9,271.4h0M183.3,271.4h0M183.7,271.4h0M184.1,271.4h0M184.4,271.4h0M184.8,271.4h0M185.2,271.4h0M185.6,271.4h0M186,271.4h0M186.4,271.4h0M186.8,271.4h0M187.2,271.4h0M187.6,271.4h0M188,271.4h0M188.4,271.4h0M188.8,271.4h0M189.2,271.4h0M189.6,271.4h0M190,271.4h0M190.4,271.4h0M190.8,271.4h0M191.2,271.4h0M191.6,271.4h0M192,271.4h0M192.4,271.4h0M192.8,271.4h0M193.2,271.4h0M193.5,271.4h0M193.9,271.4h0M194.3,271.4h0M194.7,271.4h0M195.1,271.4h0M195.5,271.4h0M195.9,271.4h0M196.3,271.4h0M196.7,271.4h0M197.1,271.4h0M197.5,271.4h0M197.9,271.4h0M198.3,271.4h0M198.7,271.4h0M199.1,271.4h0M199.5,271.4h0M199.9,271.4h0M200.3,271.4h0M200.7,271.4h0M201.1,271.4h0M201.5,271.4h0M201.9,271.4h0M202.2,271.4h0M202.6,271.4h0M203,271.4h0M203.4,271.4h0M203.8,271.4h0M204.2,271.4h0M204.6,271.4h0M205,271.4h0M205.4,271.4h0M205.8,271.4h0M206.2,271.4h0M206.6,271.4h0M207,271.4h0M207.4,271.4h0M207.8,271.4h0M208.2,271.4h0M208.6,271.4h0M209,271.4h0M209.4,271.4h0M209.8,271.4h0M210.2,271.4h0M210.6,271.4h0M210.9,271.4h0M211.3,271.4h0M211.7,271.4h0M212.1,271.4h0M212.5,271.4h0M212.9,271.4h0M213.3,271.4h0M213.7,271.4h0M214.1,271.4h0M214.5,271.4h0M214.9,271.4h0M215.3,271.4h0M215.7,271.4h0M216.1,271.4h0M216.5,271.4h0M216.9,271.4h0M217.3,271.4h0M217.7,271.4h0M218.1,271.4h0M218.5,271.4h0M218.9,271.4h0M219.3,271.4h0M219.6,271.4h0M220,271.4h0M220.4,271.4h0M220.8,271.4h0M221.2,271.4h0M221.6,271.4h0M222,271.4h0M222.4,271.4h0M222.8,271.4h0M223.2,271.4h0M223.6,271.4h0M224,271.4h0M224.4,271.4h0M224.8,271.4h0M225.2,271.4h0M225.6,271.4h0M226,271.4h0M226.4,271.4h0M226.8,271.4h0M227.2,271.4h0M227.6,271.4h0M228,271.4h0M228.3,271.4h0M228.7,271.4h0M229.1,271.4h0M229.5,271.4h0M229.9,271.4h0M230.3,271.4h0M230.7,271.4h0M231.1,271.4h0M231.5,271.4h0M231.9,271.4h0M232.3,271.4h0M232.7,271.4h0M233.1,271.4h0M233.5,271.4h0M233.9,271.4h0M234.3,271.4h0M234.7,271.4h0M235.1,271.4h0M235.5,271.4h0M235.9,271.4h0M236.3,271.4h0M236.7,271.4h0M237.1,271.4h0M237.4,271.4h0M237.8,271.4h0M238.2,271.4h0M238.6,271.4h0M239,271.4h0M239.4,271.4h0M239.8,271.4h0" fill="none" stroke="#0072BD" stroke-width="3" stroke-linecap="round"/>
<path d="M108.7,701.5L118.3,701.5M110.1,698.1L116.9,704.9M113.5,696.7L113.5,706.3M116.9,698.1L110.1,704.9M148.7,271.5L158.3,271.5M150.1,268.1L156.9,274.9M153.5,266.7L153.5,276.3M156.9,268.1L150.1,274.9M187.7,271.5L197.3,271.5M189.1,268.1L195.9,274.9M192.5,266.7L192.5,276.3M195.9,268.1L189.1,274.9M227.7,271.5L237.3,271.5M229.1,268.1L235.9,274.9M232.5,266.7L232.5,276.3M235.9,268.1L229.1,274.9M266.7,271.5L276.3,271.5M268.1,268.1L274.9,274.9M271.5,266.7L271.5,276.3M274.9,268.1L268.1,274.9M306.7,271.5L316.3,271.5M308.1,268.1L314.9,274.9M311.5,266.7L311.5,276.3M314.9,268.1L308.1,274.9M346.7,271.5L356.3,271.5M348.1,268.1L354.9,274.9M351.5,266.7L351.5,276.3M354.9,268.1L348.1,274.9M385.7,271.5L395.3,271.5M387.1,268.1L393.9,274.9M390.5,266.7L390.5,276.3M393.9,268.1L387.1,274.9M425.7,271.5L435.3,271.5M427.1,268.1L433.9,274.9M430.5,266.7L430.5,276.3M433.9,268.1L427.1,274.9M464.7,271.5L474.3,271.5M466.1,268.1L472.9,274.9M469.5,266.7L469.5,276.3M472.9,268.1L466.1,274.9M504.7,271.5L514.3,271.5M506.1,268.1L512.9,274.9M509.5,266.7L509.5,276.3M512.9,268.1L506.1,274.9M543.7,271.5L553.3,271.5M545.1,268.1L551.9,274.9M548.5,266.7L548.5,276.3M551.9,268.1L545.1,274.9M583.7,271.5L593.3,271.5M585.1,268.1L591.9,274.9M588.5,266.7L588.5,276.3M591.9,268.1L585.1,274.9M622.7,271.5L632.3,271.5M624.1,268.1L630.9,274.9M627.5,266.7L627.5,276.3M630.9,268.1L624.1,274.9M662.7,271.5L672.3,271.5M664.1,268.1L670.9,274.9M667.5,266.7L667.5,276.3M670.9,268.1L664.1,274.9M702.7,271.5L712.3,271.5M704.1,268.1L710.9,274.9M707.5,266.7L707.5,276.3M710.9,268.1L704.1,274.9M741.7,271.5L751.3,271.5M743.1,268.1L749.9,274.9M746.5,266.7L746.5,276.3M749.9,268.1L743.1,274.9M781.7,271.5L791.3,271.5M783.1,268.1L789.9,274.9M786.5,266.7L786.5,276.3M789.9,268.1L783.1,274.9M820.7,271.5L830.3,271.5M822.1,268.1L828.9,274.9M825.5,266.7L825.5,276.3M828.9,268.1L822.1,274.9M860.7,271.5L870.3,271.5M862.1,268.1L868.9,274.9M865.5,266.7L865.5,276.3M868.9,268.1L862.1,274.9" fill="none" stroke="#D6008C" stroke-width="1.3"/>
</g>
</svg>
<!-- progress -->
<div class="a" style="left:911px;top:97px;width:160px;height:15px;background:#2a8bdc"></div>
<div class="a" style="left:1081px;top:92px;width:110px;height:25px;border:1px solid #cdcdcd;border-radius:4px;background:#f5f5f5"></div>
<div class="t" style="left:1081px;width:110px;text-align:center;top:98px;font-size:12px;color:#a6a6a6">Training stopped</div>
<div class="t" style="left:911px;top:129px">Episode number:</div>
<div class="t" style="left:1041px;top:129px">2000/2000</div>
<div class="t" style="left:911px;top:154px">Start time:</div>
<div class="t" style="left:1041px;top:154px">12-Nov-2024 20:42:22</div>
<div class="t" style="left:911px;top:179px">Duration:</div>
<div class="t" style="left:1041px;top:179px">00:33:21</div>
<div class="t" style="left:911px;top:204px">Final result:</div>
<div class="t" style="left:1041px;top:204px">Training finished with</div>
<div class="t" style="left:1041px;top:219px">maximum number of</div>
<div class="t" style="left:1041px;top:233px">episodes.</div>
<!-- training info panel -->
<div class="a" style="left:911px;top:258px;width:280px;height:295px;border:1px solid #a8a8a8"></div>
<div class="a" style="left:912px;top:278px;width:278px;height:1px;background:#a8a8a8"></div>
<div class="t" style="left:915px;top:262px;font-weight:bold">Training Information</div>
<div class="a" style="left:922px;top:289px;width:258px;height:95px;border:1px solid #a0a0a0;background:#fff"></div>
<div class="a" style="left:923px;top:290px;width:256px;height:27px;background:#f5f5f5;border-bottom:1px solid #a0a0a0"></div>
<div class="a" style="left:923px;top:317px;width:256px;height:25px;background:#2a8bdc;border-bottom:1px solid #a0a0a0"></div>
<div class="a" style="left:1051px;top:290px;width:1px;height:52px;background:#a0a0a0"></div>
<div class="t" style="left:926px;top:298px;font-weight:bold">Agent</div>
<div class="t" style="left:1055px;top:298px;font-weight:bold">Status</div>
<div class="t" style="left:926px;top:321px;font-size:11.6px;letter-spacing:-0.3px;font-weight:bold;color:#fff">rlPGAgent</div>
<div class="t" style="left:1055px;top:321px;font-size:11.6px;letter-spacing:-0.3px;font-weight:bold;color:#fff">Training finished</div>
<div class="t" style="left:922px;top:396px;font-weight:bold">Episode Information (rlPGAgent):</div>
<div class="t" style="left:922px;top:421px">Episode reward:</div>
<div class="t" style="left:1042px;top:421px">-862.466</div>
<div class="t" style="left:922px;top:446px">Average reward:</div>
<div class="t" style="left:1042px;top:446px">-862.466</div>
<div class="t" style="left:922px;top:471px">Episode Q0:</div>
<div class="t" style="left:1042px;top:471px">-440.7514</div>
<div class="t" style="left:922px;top:496px">Evaluation statistic:</div>
<div class="t" style="left:1042px;top:496px">-862.466</div>
<div class="a" style="left:1070px;top:519px;width:110px;height:23px;border:1px solid #8c8c8c;border-radius:4px;background:#fbfbfb"></div>
<div class="t" style="left:1070px;width:110px;text-align:center;top:524px">More Details...</div>
<!-- plot options -->
<div class="a" style="left:911px;top:563px;width:280px;height:118px;border:1px solid #a8a8a8"></div>
<div class="a" style="left:912px;top:583px;width:278px;height:1px;background:#a8a8a8"></div>
<div class="t" style="left:915px;top:567px;font-weight:bold">Plot Options</div>
<div class="a" style="left:922px;top:595px;width:14px;height:14px;border:1px solid #4a4a4a;background:#fff"></div>
<svg class="a" style="left:922px;top:595px" width="14" height="14" viewBox="0 0 14 14"><path d="M3,7.2L5.6,10L11,3.5" fill="none" stroke="#1a1a1a" stroke-width="1.9"/></svg>
<div class="t" style="left:939px;top:596px">Show EpisodeQ0</div>
<div class="a" style="left:922px;top:622px;width:14px;height:14px;border:1px solid #4a4a4a;background:#fff"></div>
<svg class="a" style="left:922px;top:622px" width="14" height="14" viewBox="0 0 14 14"><path d="M3,7.2L5.6,10L11,3.5" fill="none" stroke="#1a1a1a" stroke-width="1.9"/></svg>
<div class="t" style="left:939px;top:623px">Show evaluation statistic</div>
<div class="a" style="left:922px;top:652px;width:14px;height:14px;border:1px solid #4a4a4a;background:#fff"></div>
<div class="t" style="left:939px;top:652px">Show last N episodes</div>
<div class="a" style="left:1066px;top:647px;width:114px;height:23px;border:1px solid #d8d8d8;background:#f3f3f3"></div>
<div class="t" style="left:1066px;width:109px;text-align:right;top:652px;color:#a6a6a6">2000</div>
<!-- legend -->
<div class="a" style="left:911px;top:691px;width:280px;height:102px;border:1px solid #a0a0a0"></div>
<div class="a" style="left:917px;top:697px;width:269px;height:90px;background:#fff"></div>
<svg class="a" style="left:0;top:0" width="1202" height="846">
<path d="M973.5,704.5H1012.5" stroke="#4DBEEE" stroke-width="1"/><circle cx="993" cy="704.5" r="1.5" fill="#4DBEEE"/>
<path d="M973.5,723.5H1012.5" stroke="#0072BD" stroke-width="1"/><circle cx="993" cy="723.5" r="1.5" fill="#0072BD"/>
<path d="M973.5,742.5H1012.5" stroke="#EDB120" stroke-width="1"/><circle cx="993" cy="742.5" r="1.5" fill="#EDB120"/>
<path d="M988.5,770.5H998.5M993.5,765.5V775.5M990,767L997,774M997,767L990,774" stroke="#D9138A" stroke-width="1"/>
</svg>
<div class="t" style="left:1017px;top:699px;font-size:10.8px">Episode reward</div>
<div class="t" style="left:1017px;top:718px;font-size:10.8px">Average reward</div>
<div class="t" style="left:1017px;top:737px;font-size:10.8px">Episode Q0</div>
<div class="t" style="left:1017px;top:760px;font-size:10.8px">Evaluation statistic</div>
<div class="t" style="left:1017px;top:772px;font-size:10.8px">(MeanEpisodeReward)</div>
<!-- axes toolbar -->
<svg class="a" style="left:764px;top:98px" width="104" height="22" viewBox="0 0 104 22">
<g fill="none" stroke="#8a8a8a" stroke-width="1" stroke-linejoin="round">
<path d="M4.5,12.5H16.5V16.5H4.5Z"/>
<path d="M6.8,13.5C6.8,10 9,7.5 12.4,7.2V4.2L16.7,7.8L12.4,11V9.2C10.2,9.4 8.8,11 8.8,13.5"/>
</g>
<path d="M20,14V18H16Z" fill="#707070"/>
<g fill="none" stroke="#666" stroke-width="1.1" stroke-linejoin="round">
<path d="M29.5,18.5L24.5,11.3C24,10.3 25.3,9.3 26.3,10L28.3,11.8V6.2C28.3,3.6 31,3.6 31,5.8C31,2.8 34,2.8 34,5.5C34,3.6 37,3.6 37,6.4C37,5 39.7,5.2 39.6,7.5L37.8,18.5Z"/><path d="M31,5.8V9.5M34,5.5V9.5M37,6.4V9.5"/>
<circle cx="50.5" cy="9.5" r="6"/>
<path d="M50.5,6.5V12.5M47.5,9.5H53.5M54.8,13.8L59,18.5"/>
<circle cx="70.5" cy="9.5" r="6"/>
<path d="M67.5,9.5H73.5M74.8,13.8L79,18.5"/>
<path d="M84.5,11L92,3.5L99.5,11M86.5,9V18.5H90.5V13.5H93.5V18.5H97.5V9"/>
</g>
<path d="M96,3.5H99.5V7Z" fill="#666"/>
</svg>

</body></html>
